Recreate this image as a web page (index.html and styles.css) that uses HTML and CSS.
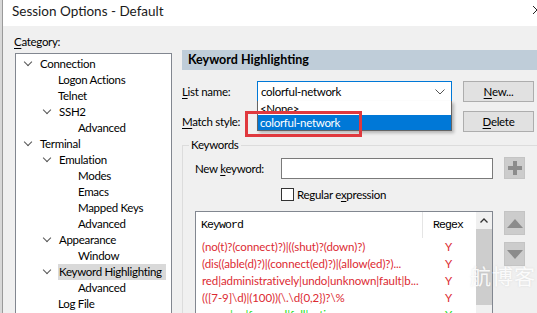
FILE: index.html
```html
<!DOCTYPE html>
<html lang="en">
<head>
  <meta charset="UTF-8" />
  <title>Session Options - Default</title>
  <link rel="stylesheet" href="styles.css">
</head>
<body>
  <div class="screen">
    <div class="behind"></div>

    <div class="dialog">
      <div class="titlebar">
        <span class="title">Session Options - Default</span>
        <svg class="close" width="8" height="10" viewBox="0 0 8 10">
          <path d="M1 1 L9 9 M1 9 L9 1" stroke="#222" stroke-width="1" fill="none"/>
        </svg>
      </div>

      <div class="content">
        <div class="left">
          <div class="cat-label"><u>C</u>ategory:</div>
          <div class="tree">
            <div class="node lvl0"><span class="chev"></span>Connection</div>
            <div class="node lvl1 leaf">Logon Actions</div>
            <div class="node lvl1 leaf">Telnet</div>
            <div class="node lvl1"><span class="chev"></span>SSH2</div>
            <div class="node lvl2 leaf">Advanced</div>
            <div class="node lvl0"><span class="chev"></span>Terminal</div>
            <div class="node lvl1"><span class="chev"></span>Emulation</div>
            <div class="node lvl2 leaf">Modes</div>
            <div class="node lvl2 leaf">Emacs</div>
            <div class="node lvl2 leaf">Mapped Keys</div>
            <div class="node lvl2 leaf">Advanced</div>
            <div class="node lvl1"><span class="chev"></span>Appearance</div>
            <div class="node lvl2 leaf">Window</div>
            <div class="node lvl1"><span class="chev"></span><span class="sel">Keyword Highlighting</span></div>
            <div class="node lvl2 leaf">Advanced</div>
            <div class="node lvl1 leaf">Log File</div>
          </div>
        </div>

        <div class="right">
          <div class="section-head">Keyword Highlighting</div>

          <div class="form-row first">
            <span class="label"><u>L</u>ist name:</span>
            <div class="combo">
              <span>colorful-network</span>
              <svg width="10" height="6" viewBox="0 0 10 6"><path d="M0.5 0.5 L5 5 L9.5 0.5" stroke="#555" fill="none"/></svg>
            </div>
            <button class="btn"><u>N</u>ew...</button>
          </div>

          <div class="form-row second">
            <span class="label"><u>M</u>atch style:</span>
            <div class="combo-spacer"></div>
            <button class="btn"><u>D</u>elete</button>
          </div>

          <div class="dropdown">
            <div class="opt none">&lt;None&gt;</div>
            <div class="opt active">colorful-network</div>
          </div>
          <div class="mark"></div>

          <div class="group">
            <span class="legend">Keywords</span>

            <div class="kw-row">
              <span class="kw-label">New <u>k</u>eyword:</span>
              <div class="textbox"></div>
              <div class="icon-btn">
                <svg width="16" height="16" viewBox="0 0 16 16"><path d="M6 1h4v5h5v4h-5v5h-4v-5h-5v-4h5z" fill="#8c8c8c"/></svg>
              </div>
            </div>

            <div class="check-row">
              <span class="checkbox"></span>
              <span>Regular e<u>x</u>pression</span>
            </div>

            <div class="list-row">
              <div class="list">
                <div class="cols">
                  <div class="col-kw">
                    <div class="hd">Keyword</div>
                    <div class="cell red">(no(t)?(connect)?)|((shut)?(down)?)</div>
                    <div class="cell red">(dis((able(d)?)|(connect(ed)?)|(allow(ed)?)...</div>
                    <div class="cell red">red|administratively|undo|unknown|fault|b...</div>
                    <div class="cell red">(([7-9]\d)|(100))(\.\d{0,2})?\%</div>
                    <div class="cell green">green|up|forward|full|active</div>
                  </div>
                  <div class="col-rx">
                    <div class="hd">Regex</div>
                    <div class="cell red">Y</div>
                    <div class="cell red">Y</div>
                    <div class="cell red">Y</div>
                    <div class="cell red">Y</div>
                    <div class="cell green">Y</div>
                  </div>
                  <div class="scroll">
                    <div class="arrow">
                      <svg width="8" height="5" viewBox="0 0 8 5"><path d="M0.5 4.5 L4 1 L7.5 4.5" stroke="#333" stroke-width="1.3" fill="none"/></svg>
                    </div>
                    <div class="thumb"></div>
                  </div>
                </div>
              </div>

              <div class="move-btns">
                <div class="icon-btn tall">
                  <svg width="16" height="9" viewBox="0 0 16 9"><path d="M8 0 L16 9 L0 9 z" fill="#8c8c8c"/></svg>
                </div>
                <div class="icon-btn tall">
                  <svg width="16" height="9" viewBox="0 0 16 9"><path d="M0 0 L16 0 L8 9 z" fill="#8c8c8c"/></svg>
                </div>
              </div>
            </div>
          </div>

          <div class="watermark">航博客</div>
        </div>
      </div>
    </div>
  </div>
</body>
</html>
```

FILE: styles.css
```css
html, body {
  margin: 0;
  padding: 0;
  width: 537px;
  height: 313px;
  overflow: hidden;
  font-family: Lato, 'Noto Sans', sans-serif;
  font-size: 11.5px;
  letter-spacing: -0.3px;
  color: #000;
}
u {
  text-decoration: underline;
  text-underline-offset: 2px;
}
.screen {
  display: flex;
  height: 313px;
}
.behind {
  width: 2px;
  background: #d8d8d8;
  border-right: 1px solid #9a9a9a;
}
.dialog {
  flex: 1;
  display: flex;
  flex-direction: column;
  background: #f0f0f0;
}
.titlebar {
  height: 26px;
  background: #fff;
  display: flex;
  align-items: center;
  padding-left: 9px;
  position: relative;
}
.title {
  font-size: 13.5px;
  letter-spacing: 0;
  color: #1a1a1a;
  margin-top: -4px;
}
.close {
  position: absolute;
  right: -3px;
  top: 5px;
}
.content {
  flex: 1;
  display: flex;
  min-height: 0;
}

/* category tree */
.left {
  width: 179px;
  padding-left: 11px;
  box-sizing: border-box;
}
.cat-label {
  height: 16px;
  line-height: 16px;
  margin-top: 8px;
  margin-bottom: 3px;
}
.tree {
  width: 157px;
  height: 300px;
  box-sizing: border-box;
  margin-left: 1px;
  background: #fff;
  border: 1px solid #828790;
  padding-top: 2px;
}
.node {
  height: 16px;
  line-height: 16px;
  display: flex;
  align-items: center;
  white-space: nowrap;
}
.lvl0 { padding-left: 7px; }
.lvl1 { padding-left: 26px; }
.lvl2 { padding-left: 45px; }
.lvl0.leaf { padding-left: 24px; }
.lvl1.leaf { padding-left: 42px; }
.lvl2.leaf { padding-left: 62px; }
.chev {
  flex-shrink: 0;
  width: 5px;
  height: 5px;
  border-right: 1.3px solid #555;
  border-bottom: 1.3px solid #555;
  transform: rotate(45deg);
  margin: -4px 9px 0 2px;
}
.sel {
  background: #d9d9d9;
  padding: 0 4px 0 1px;
  margin-left: -1px;
}

/* right panel */
.right {
  flex: 1;
  position: relative;
}
.section-head {
  margin-top: 24px;
  height: 20px;
  line-height: 20px;
  background: #bfcdd9;
  font-weight: bold;
  font-size: 12.5px;
  letter-spacing: 0;
  padding-left: 6px;
}
.form-row {
  display: flex;
  align-items: center;
}
.form-row.first { margin-top: 11px; }
.form-row.second { margin-top: 9px; }
.label {
  width: 75px;
}
.combo {
  width: 195px;
  height: 21px;
  box-sizing: border-box;
  border: 1px solid #0078d7;
  background: #fff;
  display: flex;
  align-items: center;
  justify-content: space-between;
  padding: 0 6px 0 3px;
}
.combo-spacer { width: 195px; }
.btn {
  margin-left: 11px;
  width: 71px;
  height: 21px;
  font: inherit;
  letter-spacing: inherit;
  background: #e1e1e1;
  border: 1px solid #adadad;
  padding: 0;
}
.dropdown {
  position: absolute;
  left: 75px;
  top: 75px;
  width: 195px;
  box-sizing: border-box;
  border: 1px solid #646464;
  border-top: none;
  background: #fff;
  box-shadow: 2px 2px 3px rgba(0, 0, 0, 0.25);
}
.opt {
  white-space: nowrap;
  padding-left: 2px;
  overflow: hidden;
}
.opt.none {
  height: 10px;
  line-height: 15px;
  margin-bottom: 4px;
}
.opt.active {
  height: 15px;
  line-height: 15px;
  background: #0078d7;
  color: #fff;
}
.mark {
  position: absolute;
  left: 63px;
  top: 85px;
  width: 111px;
  height: 20px;
  border: 3px solid #e0393e;
}

/* keywords group */
.group {
  margin-top: 13px;
  border-top: 1px solid #dcdcdc;
  border-left: 1px solid #dcdcdc;
  position: relative;
  padding: 11px 0 0 12px;
}
.legend {
  position: absolute;
  left: 6px;
  top: -9px;
  background: #f0f0f0;
  padding: 0 2px;
  line-height: 16px;
}
.kw-row {
  display: flex;
  align-items: center;
}
.kw-label { width: 86px; }
.textbox {
  width: 212px;
  height: 21px;
  box-sizing: border-box;
  border: 1px solid #7a7a7a;
  background: #fff;
}
.icon-btn {
  margin-left: 11px;
  width: 21px;
  height: 22px;
  box-sizing: border-box;
  background: #cccccc;
  border: 1px solid #c4c4c4;
  display: flex;
  align-items: center;
  justify-content: center;
}
.icon-btn.tall { height: 24px; margin-left: 0; }
.check-row {
  display: flex;
  align-items: center;
  margin: 8px 0 0 86px;
  height: 14px;
}
.checkbox {
  width: 13px;
  height: 13px;
  box-sizing: border-box;
  border: 1px solid #333;
  background: #fff;
  margin-right: 3px;
}
.list-row {
  display: flex;
  margin-top: 10px;
}
.list {
  width: 298px;
  height: 120px;
  box-sizing: border-box;
  border: 1px solid #828790;
  background: #fff;
}
.cols {
  display: flex;
  height: 100%;
}
.col-kw { width: 227px; }
.col-rx { width: 53px; }
.hd {
  height: 26px;
  line-height: 26px;
  font-family: 'Liberation Mono', 'DejaVu Sans Mono', monospace;
  font-size: 11.5px;
  letter-spacing: -0.9px;
  padding-left: 5px;
}
.col-kw .hd { border-right: 1px solid #e5e5e5; }
.col-rx .hd { padding-left: 10px; }
.cell {
  height: 17px;
  line-height: 17px;
  white-space: nowrap;
  overflow: hidden;
  padding-left: 6px;
  letter-spacing: -0.1px;
}
.col-rx .cell { padding-left: 22px; }
.red { color: #dc2a32; }
.green { color: #22dd22; }
.scroll {
  width: 16px;
  background: #f0f0f0;
}
.arrow {
  height: 17px;
  display: flex;
  align-items: center;
  justify-content: center;
}
.thumb {
  height: 76px;
  background: #cdcdcd;
}
.move-btns {
  margin-left: 11px;
  display: flex;
  flex-direction: column;
  gap: 7px;
}
.watermark {
  position: absolute;
  left: 288px;
  top: 234px;
  font-family: 'Noto Sans CJK SC', sans-serif;
  font-size: 21px;
  color: rgba(255, 255, 255, 0.9);
  letter-spacing: 1px;
  text-shadow: 0 0 2px rgba(180, 180, 180, 0.4);
}
```
